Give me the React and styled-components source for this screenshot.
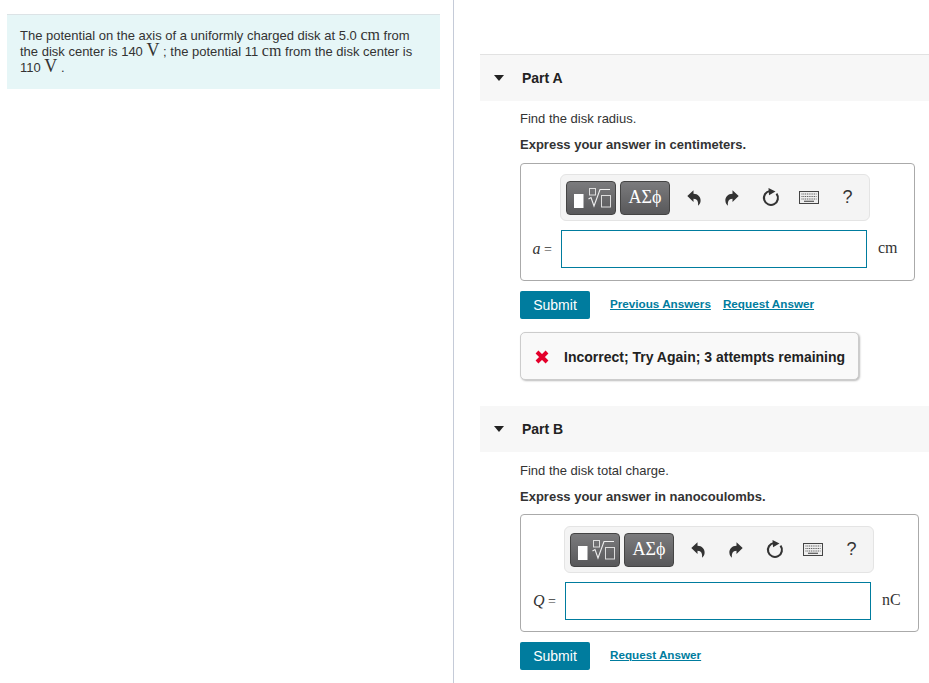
import React from 'react';
import styled, { createGlobalStyle } from 'styled-components';

const Global = createGlobalStyle`
  html, body { margin: 0; padding: 0; background: #fff; }
  body { font-family: "Liberation Sans", Arial, sans-serif; font-size: 14px; color: #333; }
`;
const Page = styled.div`
  display: flex; width: 929px; height: 683px; overflow: hidden;
`;
const LeftCol = styled.div`
  box-sizing: border-box; width: 454px; height: 683px; flex: none;
  padding: 14px 13px 0 7px; border-right: 1px solid #c5cbd8;
`;
const Intro = styled.div`
  box-sizing: border-box; height: 75px; background: #e6f6f7; border-top: 1px solid #dce3e6;
  padding: 13px 13px 0; font-size: 13px; line-height: 16px; color: #333; white-space: nowrap;
`;
const M = styled.span`
  font-family: "Liberation Serif", serif; font-size: ${p => p.$s || 16}px; line-height: 0;
`;
const RightCol = styled.div`
  flex: 1; padding: 54px 0 0 26px; min-width: 0;
`;
const PartBlock = styled.div`
  margin-top: ${p => p.$mt || 0}px;
`;
const PartHeader = styled.div`
  box-sizing: border-box; height: ${p => p.$first ? 47 : 46}px; background: #f7f7f7;
  ${p => p.$first ? 'border-top: 1px solid #e2e2e2;' : ''}
  display: flex; align-items: center; padding-left: 14px;
  font-weight: bold; font-size: 14px; color: #222;
`;
const Caret = styled.span`
  width: 0; height: 0; border-left: 5.5px solid transparent; border-right: 5.5px solid transparent;
  border-top: 6px solid #222; margin-right: 18px;
`;
const PartBody = styled.div`
  padding-left: 40px;
`;
const Para = styled.p`
  margin: 0; font-size: 13px; line-height: 16px; color: #333; padding-top: ${p => p.$pt}px;
  font-weight: ${p => p.$bold ? 'bold' : 'normal'};
`;
const AnswerBox = styled.div`
  box-sizing: border-box; width: ${p => p.$w}px; height: 118px; margin-top: ${p => p.$mt}px;
  border: 1px solid #aaa; border-radius: 4px; background: #fff;
  display: flex; flex-direction: column; padding-top: ${p => p.$pt}px;
`;
const Toolbar = styled.div`
  box-sizing: border-box; width: 310px; height: 47px; margin-left: ${p => p.$ml}px;
  background: #f4f4f4; border: 1px solid #e4e4e4; border-radius: 6px;
  display: flex; align-items: center; padding-left: 5px; flex: none;
`;
const TplButton = styled.div`
  box-sizing: border-box; width: 50px; height: 34px; margin-right: 4px; flex: none;
  border-radius: 4px; border: 1px solid #444;
  background: linear-gradient(#7b7b7d, #58585a);
  display: flex; align-items: center; justify-content: center; color: #fff;
  font-family: "Liberation Serif", serif; font-size: 18px;
`;
const ToolIcon = styled.span`
  display: flex; align-items: center; justify-content: center; flex: none;
  width: ${p => p.$w}px; height: 34px; color: #333; font-size: 18px;
  font-family: "Liberation Sans", sans-serif;
`;
const InputRow = styled.div`
  display: flex; align-items: center; margin-top: ${p => p.$mt}px;
`;
const VarLabel = styled.div`
  box-sizing: border-box; width: ${p => p.$w}px; text-align: right; padding-right: 9px; flex: none;
  font-family: "Liberation Serif", serif; font-size: 14px; color: #333;
  i { font-size: 16px; }
`;
const MathInput = styled.div`
  box-sizing: border-box; width: 306px; height: 38px; flex: none;
  border: 1px solid #007c9e; background: #fff;
`;
const Unit = styled.div`
  margin-left: 11px; margin-top: -2px; font-family: "Liberation Serif", serif; font-size: 16px; color: #333;
`;
const Actions = styled.div`
  display: flex; align-items: flex-start; margin-top: ${p => p.$mt}px;
`;
const SubmitBtn = styled.div`
  box-sizing: border-box; width: 70px; height: 28px; border-radius: 2px; background: #007c9e;
  color: #fff; font-size: 14px; display: flex; align-items: center; justify-content: center;
  margin-right: 20px; padding-bottom: 1px;
`;
const LinkText = styled.a`
  font-size: 11.7px; font-weight: bold; color: #007c9e; text-decoration: underline;
  line-height: 14px; margin-right: 12px; margin-top: 6px;
`;
const Feedback = styled.div`
  box-sizing: border-box; width: 339px; height: 48px; margin-top: 13px;
  background: #f9f9f9; border: 1px solid #ccc; border-radius: 5px;
  box-shadow: 1px 1px 2px #bbb; display: flex; align-items: center; padding: 2px 0 0 14px;
  font-weight: bold; font-size: 14px; color: #222;
  svg { margin-right: 15px; flex: none; }
`;

const RadicalIcon = () => (
  <svg width="44" height="28" viewBox="0 0 44 28">
    <rect x="5" y="10" width="9.5" height="14" fill="#fff" />
    <rect x="20.5" y="4.5" width="6" height="6.5" fill="none" stroke="#ddd" strokeWidth="1" />
    <path d="M19.5 15 L22 13.5 L25 22 L31 5.5 H41" fill="none" stroke="#eee" strokeWidth="1.1" />
    <rect x="32.5" y="11.5" width="9" height="11.5" fill="none" stroke="#ddd" strokeWidth="1" />
  </svg>
);
const Undo = () => (
  <svg width="14" height="16" viewBox="0 0 14 16">
    <path d="M0.3 6 L6.5 0.3 V3.7 C11 3.7 14 7 13.6 11 C13.4 13 12.5 14.5 11 15.7 C11.6 12 10.5 8.7 6.5 8.7 V12 Z" fill="#333" />
  </svg>
);
const Redo = () => (
  <svg width="14" height="16" viewBox="0 0 14 16">
    <path d="M13.7 6 L7.5 0.3 V3.7 C3 3.7 0 7 0.4 11 C0.6 13 1.5 14.5 3 15.7 C2.4 12 3.5 8.7 7.5 8.7 V12 Z" fill="#333" />
  </svg>
);
const Reset = () => (
  <svg width="18" height="19" viewBox="0 0 18 19">
    <path d="M8 3 A7 7 0 1 0 14.5 5.7" fill="none" stroke="#333" strokeWidth="2.1" />
    <path d="M6.5 0 L13.5 3.4 L7 7.2 Z" fill="#333" />
  </svg>
);
const Keyboard = () => (
  <svg width="20" height="13" viewBox="0 0 20 13">
    <rect x="0.5" y="0.5" width="19" height="12" fill="#eee" stroke="#444" />
    <path d="M2.5 3 H17.5 M2.5 5.5 H17.5 M2.5 8 H17.5" stroke="#555" strokeWidth="1.2" strokeDasharray="1 .8" />
    <path d="M5 10.3 H15" stroke="#555" strokeWidth="1.2" />
  </svg>
);
const Cross = () => (
  <svg width="14" height="14" viewBox="0 0 14 14">
    <path d="M2 2 L12 12 M12 2 L2 12" stroke="#e4002b" strokeWidth="4" />
  </svg>
);

const Tools = ({ ml }) => (
  <Toolbar $ml={ml}>
    <TplButton><RadicalIcon /></TplButton>
    <TplButton>ΑΣϕ</TplButton>
    <ToolIcon $w={40}><Undo /></ToolIcon>
    <ToolIcon $w={36}><Redo /></ToolIcon>
    <ToolIcon $w={42}><Reset /></ToolIcon>
    <ToolIcon $w={34}><Keyboard /></ToolIcon>
    <ToolIcon $w={43}>?</ToolIcon>
  </Toolbar>
);

export default function App() {
  return (
    <Page>
      <Global />
      <LeftCol>
        <Intro>
          The potential on the axis of a uniformly charged disk at 5.0 <M>cm</M> from<br />
          the disk center is 140 <M $s={18}>V</M> ; the potential 11 <M>cm</M> from the disk center is<br />
          110 <M $s={18}>V</M> .
        </Intro>
      </LeftCol>
      <RightCol>
        <PartBlock>
          <PartHeader $first><Caret />Part A</PartHeader>
          <PartBody>
            <Para $pt={10}>Find the disk radius.</Para>
            <Para $pt={10} $bold>Express your answer in centimeters.</Para>
            <AnswerBox $w={395} $mt={10} $pt={10}>
              <Tools ml={39} />
              <InputRow $mt={9}>
                <VarLabel $w={40}><i>a</i> =</VarLabel>
                <MathInput />
                <Unit>cm</Unit>
              </InputRow>
            </AnswerBox>
            <Actions $mt={10}>
              <SubmitBtn>Submit</SubmitBtn>
              <LinkText>Previous Answers</LinkText>
              <LinkText>Request Answer</LinkText>
            </Actions>
            <Feedback><Cross />Incorrect; Try Again; 3 attempts remaining</Feedback>
          </PartBody>
        </PartBlock>
        <PartBlock $mt={26}>
          <PartHeader><Caret />Part B</PartHeader>
          <PartBody>
            <Para $pt={11}>Find the disk total charge.</Para>
            <Para $pt={10} $bold>Express your answer in nanocoulombs.</Para>
            <AnswerBox $w={399} $mt={9} $pt={11}>
              <Tools ml={43} />
              <InputRow $mt={9}>
                <VarLabel $w={44}><i>Q</i> =</VarLabel>
                <MathInput />
                <Unit>nC</Unit>
              </InputRow>
            </AnswerBox>
            <Actions $mt={10}>
              <SubmitBtn>Submit</SubmitBtn>
              <LinkText>Request Answer</LinkText>
            </Actions>
          </PartBody>
        </PartBlock>
      </RightCol>
    </Page>
  );
}
